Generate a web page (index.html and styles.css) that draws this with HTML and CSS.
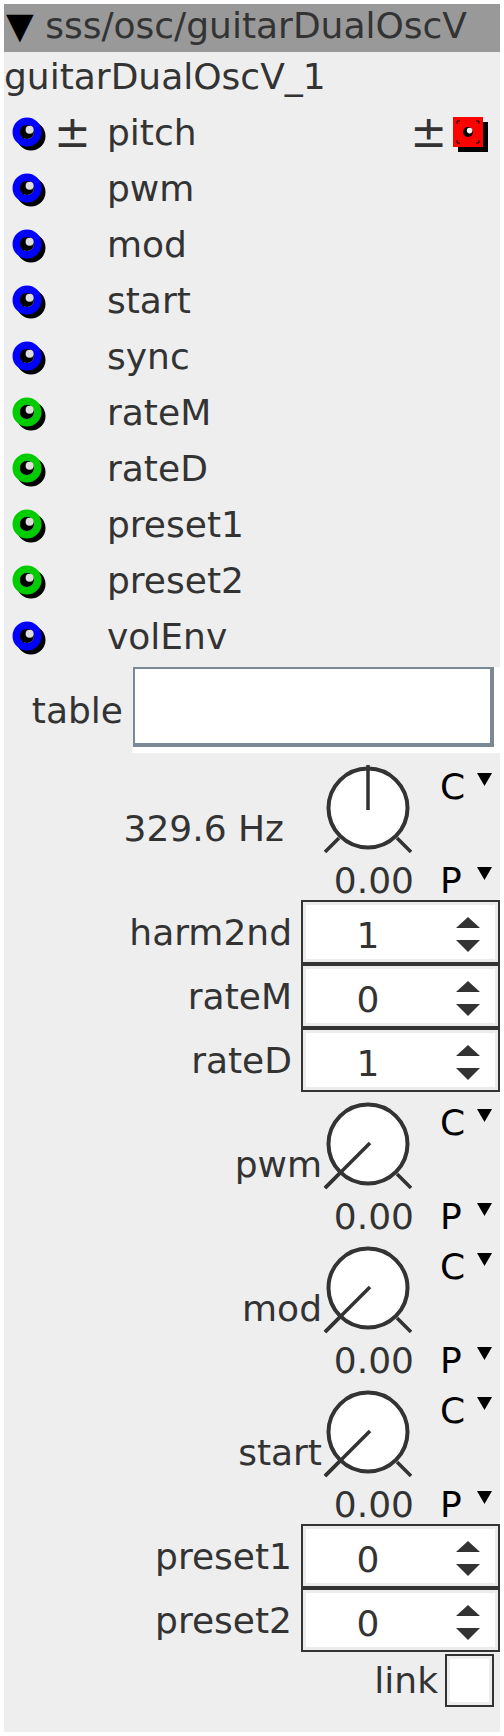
FILE: index.html
```html
<!DOCTYPE html>
<html lang="en">
    <head>
        <meta charset="UTF-8">
        <meta name="viewport" content="width=device-width, initial-scale=1.0">
        <title>sss/osc/guitarDualOscV</title>
        <link rel="stylesheet" href="styles.css">
    </head>
    <body>
        <div class="object">
            <div class="title"><span class="collapse">▼</span> sss/osc/guitarDualOscV</div>
            <div class="instance">guitarDualOscV_1</div>

            <!-- inlets -->
            <div class="port">
                <svg class="jack" viewBox="0 0 36 36"><circle class="shadow" cx="20" cy="20" r="10.75"/><circle class="ring" cx="16" cy="16" r="10.75"/><circle class="hole" cx="16" cy="16" r="7"/><circle class="glint" cx="18.6" cy="13.8" r="4"/></svg>
                <span class="bipolar">±</span>
                <span class="port-name">pitch</span>
                <span class="bipolar out">±</span>
                <svg class="outlet" viewBox="0 0 40 40"><rect x="7" y="10" width="30" height="30" fill="#000"/><rect x="2" y="5" width="30" height="30" fill="#f00"/><path d="M6 12V9h3M25 9h3v3M28 28v3h-3M9 31H6v-3" stroke="#000" stroke-width="1" fill="none"/><circle cx="17" cy="20" r="5" fill="#000"/><circle cx="18.6" cy="18.6" r="2.8" fill="#fff"/></svg>
            </div>
            <div class="port">
                <svg class="jack" viewBox="0 0 36 36"><circle class="shadow" cx="20" cy="20" r="10.75"/><circle class="ring" cx="16" cy="16" r="10.75"/><circle class="hole" cx="16" cy="16" r="7"/><circle class="glint" cx="18.6" cy="13.8" r="4"/></svg>
                <span class="bipolar"></span>
                <span class="port-name">pwm</span>
            </div>
            <div class="port">
                <svg class="jack" viewBox="0 0 36 36"><circle class="shadow" cx="20" cy="20" r="10.75"/><circle class="ring" cx="16" cy="16" r="10.75"/><circle class="hole" cx="16" cy="16" r="7"/><circle class="glint" cx="18.6" cy="13.8" r="4"/></svg>
                <span class="bipolar"></span>
                <span class="port-name">mod</span>
            </div>
            <div class="port">
                <svg class="jack" viewBox="0 0 36 36"><circle class="shadow" cx="20" cy="20" r="10.75"/><circle class="ring" cx="16" cy="16" r="10.75"/><circle class="hole" cx="16" cy="16" r="7"/><circle class="glint" cx="18.6" cy="13.8" r="4"/></svg>
                <span class="bipolar"></span>
                <span class="port-name">start</span>
            </div>
            <div class="port">
                <svg class="jack" viewBox="0 0 36 36"><circle class="shadow" cx="20" cy="20" r="10.75"/><circle class="ring" cx="16" cy="16" r="10.75"/><circle class="hole" cx="16" cy="16" r="7"/><circle class="glint" cx="18.6" cy="13.8" r="4"/></svg>
                <span class="bipolar"></span>
                <span class="port-name">sync</span>
            </div>
            <div class="port">
                <svg class="jack int" viewBox="0 0 36 36"><circle class="shadow" cx="20" cy="20" r="10.75"/><circle class="ring" cx="16" cy="16" r="10.75"/><circle class="hole" cx="16" cy="16" r="7"/><circle class="glint" cx="18.6" cy="13.8" r="4"/></svg>
                <span class="bipolar"></span>
                <span class="port-name">rateM</span>
            </div>
            <div class="port">
                <svg class="jack int" viewBox="0 0 36 36"><circle class="shadow" cx="20" cy="20" r="10.75"/><circle class="ring" cx="16" cy="16" r="10.75"/><circle class="hole" cx="16" cy="16" r="7"/><circle class="glint" cx="18.6" cy="13.8" r="4"/></svg>
                <span class="bipolar"></span>
                <span class="port-name">rateD</span>
            </div>
            <div class="port">
                <svg class="jack int" viewBox="0 0 36 36"><circle class="shadow" cx="20" cy="20" r="10.75"/><circle class="ring" cx="16" cy="16" r="10.75"/><circle class="hole" cx="16" cy="16" r="7"/><circle class="glint" cx="18.6" cy="13.8" r="4"/></svg>
                <span class="bipolar"></span>
                <span class="port-name">preset1</span>
            </div>
            <div class="port">
                <svg class="jack int" viewBox="0 0 36 36"><circle class="shadow" cx="20" cy="20" r="10.75"/><circle class="ring" cx="16" cy="16" r="10.75"/><circle class="hole" cx="16" cy="16" r="7"/><circle class="glint" cx="18.6" cy="13.8" r="4"/></svg>
                <span class="bipolar"></span>
                <span class="port-name">preset2</span>
            </div>
            <div class="port">
                <svg class="jack" viewBox="0 0 36 36"><circle class="shadow" cx="20" cy="20" r="10.75"/><circle class="ring" cx="16" cy="16" r="10.75"/><circle class="hole" cx="16" cy="16" r="7"/><circle class="glint" cx="18.6" cy="13.8" r="4"/></svg>
                <span class="bipolar"></span>
                <span class="port-name">volEnv</span>
            </div>

            <!-- table attribute -->
            <div class="table-row">
                <span class="table-label">table</span>
                <div class="table-bevel"><div class="table-field"></div></div>
            </div>

            <!-- parameters -->
            <div class="knob">
                <span class="knob-label freq">329.6 Hz</span>
                <svg class="dial" viewBox="0 0 92 94"><circle cx="46" cy="44" r="39.5"/><line x1="3" y1="88" x2="17" y2="74"/><line x1="89" y1="88" x2="75" y2="74"/><line x1="46" y1="1" x2="46" y2="46"/></svg>
                <span class="mode"><span class="mode-letter">C</span><svg class="tri" viewBox="0 0 15 13"><polygon points="0,0 15,0 7.5,13"/></svg></span>
                <span class="knob-value">0.00</span>
                <span class="mode"><span class="mode-letter">P</span><svg class="tri" viewBox="0 0 15 13"><polygon points="0,0 15,0 7.5,13"/></svg></span>
            </div>
            <div class="spin-row">
                <span class="spin-label">harm2nd</span>
                <div class="spin"><span class="spin-value">1</span><svg class="arrows" viewBox="0 0 24 40"><polygon points="0,16 12,5 24,16"/><polygon points="0,28 24,28 12,40"/></svg></div>
            </div>
            <div class="spin-row">
                <span class="spin-label">rateM</span>
                <div class="spin"><span class="spin-value">0</span><svg class="arrows" viewBox="0 0 24 40"><polygon points="0,16 12,5 24,16"/><polygon points="0,28 24,28 12,40"/></svg></div>
            </div>
            <div class="spin-row">
                <span class="spin-label">rateD</span>
                <div class="spin"><span class="spin-value">1</span><svg class="arrows" viewBox="0 0 24 40"><polygon points="0,16 12,5 24,16"/><polygon points="0,28 24,28 12,40"/></svg></div>
            </div>
            <div class="knob">
                <span class="knob-label">pwm</span>
                <svg class="dial" viewBox="0 0 92 94"><circle cx="46" cy="44" r="39.5"/><line x1="3" y1="88" x2="17" y2="74"/><line x1="89" y1="88" x2="75" y2="74"/><line x1="48" y1="43" x2="3" y2="88"/></svg>
                <span class="mode"><span class="mode-letter">C</span><svg class="tri" viewBox="0 0 15 13"><polygon points="0,0 15,0 7.5,13"/></svg></span>
                <span class="knob-value">0.00</span>
                <span class="mode"><span class="mode-letter">P</span><svg class="tri" viewBox="0 0 15 13"><polygon points="0,0 15,0 7.5,13"/></svg></span>
            </div>
            <div class="knob">
                <span class="knob-label">mod</span>
                <svg class="dial" viewBox="0 0 92 94"><circle cx="46" cy="44" r="39.5"/><line x1="3" y1="88" x2="17" y2="74"/><line x1="89" y1="88" x2="75" y2="74"/><line x1="48" y1="43" x2="3" y2="88"/></svg>
                <span class="mode"><span class="mode-letter">C</span><svg class="tri" viewBox="0 0 15 13"><polygon points="0,0 15,0 7.5,13"/></svg></span>
                <span class="knob-value">0.00</span>
                <span class="mode"><span class="mode-letter">P</span><svg class="tri" viewBox="0 0 15 13"><polygon points="0,0 15,0 7.5,13"/></svg></span>
            </div>
            <div class="knob">
                <span class="knob-label">start</span>
                <svg class="dial" viewBox="0 0 92 94"><circle cx="46" cy="44" r="39.5"/><line x1="3" y1="88" x2="17" y2="74"/><line x1="89" y1="88" x2="75" y2="74"/><line x1="48" y1="43" x2="3" y2="88"/></svg>
                <span class="mode"><span class="mode-letter">C</span><svg class="tri" viewBox="0 0 15 13"><polygon points="0,0 15,0 7.5,13"/></svg></span>
                <span class="knob-value">0.00</span>
                <span class="mode"><span class="mode-letter">P</span><svg class="tri" viewBox="0 0 15 13"><polygon points="0,0 15,0 7.5,13"/></svg></span>
            </div>
            <div class="spin-row">
                <span class="spin-label">preset1</span>
                <div class="spin"><span class="spin-value">0</span><svg class="arrows" viewBox="0 0 24 40"><polygon points="0,16 12,5 24,16"/><polygon points="0,28 24,28 12,40"/></svg></div>
            </div>
            <div class="spin-row">
                <span class="spin-label">preset2</span>
                <div class="spin"><span class="spin-value">0</span><svg class="arrows" viewBox="0 0 24 40"><polygon points="0,16 12,5 24,16"/><polygon points="0,28 24,28 12,40"/></svg></div>
            </div>
            <div class="link-row">
                <span>link</span>
                <span class="check"></span>
            </div>
        </div>
    </body>
</html>
```

FILE: styles.css
```css
body {
    margin: 4px;
    background-color: #fff;
    font-family: "DejaVu Sans", sans-serif;
    font-size: 36px;
    color: #333;
}

.object {
    width: 496px;
    background-color: #eee;
    padding-bottom: 24px;
}

.title {
    height: 48px;
    line-height: 44px;
    padding-left: 2px;
    background-color: #999;
    white-space: nowrap;
}
.collapse {
    color: #000;
}

.instance {
    height: 52px;
    line-height: 50px;
    white-space: nowrap;
}

/* inlets / outlet */
.port {
    display: flex;
    align-items: center;
    height: 56px;
}
.jack {
    width: 36px;
    height: 36px;
    margin: 12px 0 0 7px;
    align-self: flex-start;
    flex: none;
}
.jack .shadow {
    fill: none;
    stroke: #000;
    stroke-width: 7.5;
}
.jack .ring {
    fill: none;
    stroke: #0000ff;
    stroke-width: 7.5;
}
.jack.int .ring {
    stroke: #00cc00;
}
.jack .hole {
    fill: #000;
}
.jack .glint {
    fill: #ddd;
}
.bipolar {
    width: 53px;
    margin-left: 7px;
    font-size: 44px;
    line-height: 56px;
    flex: none;
}
.bipolar.out {
    width: auto;
    margin-left: 0;
    margin-right: 4px;
}
.port-name {
    flex: 1;
}
.outlet {
    width: 40px;
    height: 40px;
    margin-right: 9px;
    align-self: flex-start;
    margin-top: 8px;
}

.table-row {
    display: flex;
    justify-content: flex-end;
    align-items: center;
    gap: 9px;
    height: 92px;
}
.table-bevel {
    border-style: solid;
    border-width: 0 6px 6px 1px;
    border-color: transparent #fff #fff transparent;
}
.table-field {
    width: 355px;
    height: 74px;
    background-color: #fff;
    border-style: solid;
    border-color: #7b8895;
    border-width: 2px 4px 4px 2px;
}

/* knobs */
.knob {
    display: grid;
    grid-template-columns: 1fr 92px 86px;
    grid-template-rows: 94px 42px;
    margin-top: 8px;
}
.knob-label {
    grid-row: 1 / span 2;
    align-self: center;
    text-align: right;
    padding-bottom: 8px;
}
.knob-label.freq {
    padding-right: 38px;
}
.dial {
    width: 92px;
    height: 94px;
}
.dial circle {
    fill: #fff;
    stroke: #333;
    stroke-width: 4;
}
.dial line {
    stroke: #333;
    stroke-width: 3.5;
}
.mode {
    display: flex;
    align-items: flex-start;
    padding: 2px 0 0 26px;
    color: #000;
    line-height: 42px;
}
.mode-letter {
    width: 37px;
}
.tri {
    width: 15px;
    height: 13px;
    margin-top: 7px;
    fill: #000;
}
.knob-value {
    text-align: right;
    line-height: 42px;
    padding-top: 2px;
}

/* number boxes */
.spin-row {
    display: flex;
    align-items: center;
    height: 64px;
}
.spin-label {
    flex: 1;
    text-align: right;
    padding-right: 9px;
}
.spin {
    display: flex;
    align-items: center;
    box-sizing: border-box;
    width: 199px;
    height: 64px;
    border: 2px solid #333;
    box-shadow: inset 0 0 0 3px #ececec;
    background-color: #fff;
}
.spin-value {
    width: 130px;
    text-align: center;
    padding-top: 7px;
}
.arrows {
    width: 24px;
    height: 40px;
    margin-left: 23px;
    fill: #333;
}

.link-row {
    display: flex;
    justify-content: flex-end;
    align-items: center;
    gap: 7px;
    height: 56px;
    padding-right: 6px;
}
.check {
    box-sizing: border-box;
    width: 49px;
    height: 53px;
    border: 2px solid #333;
    box-shadow: inset 0 0 0 3px #eee;
    background-color: #fff;
}
```
